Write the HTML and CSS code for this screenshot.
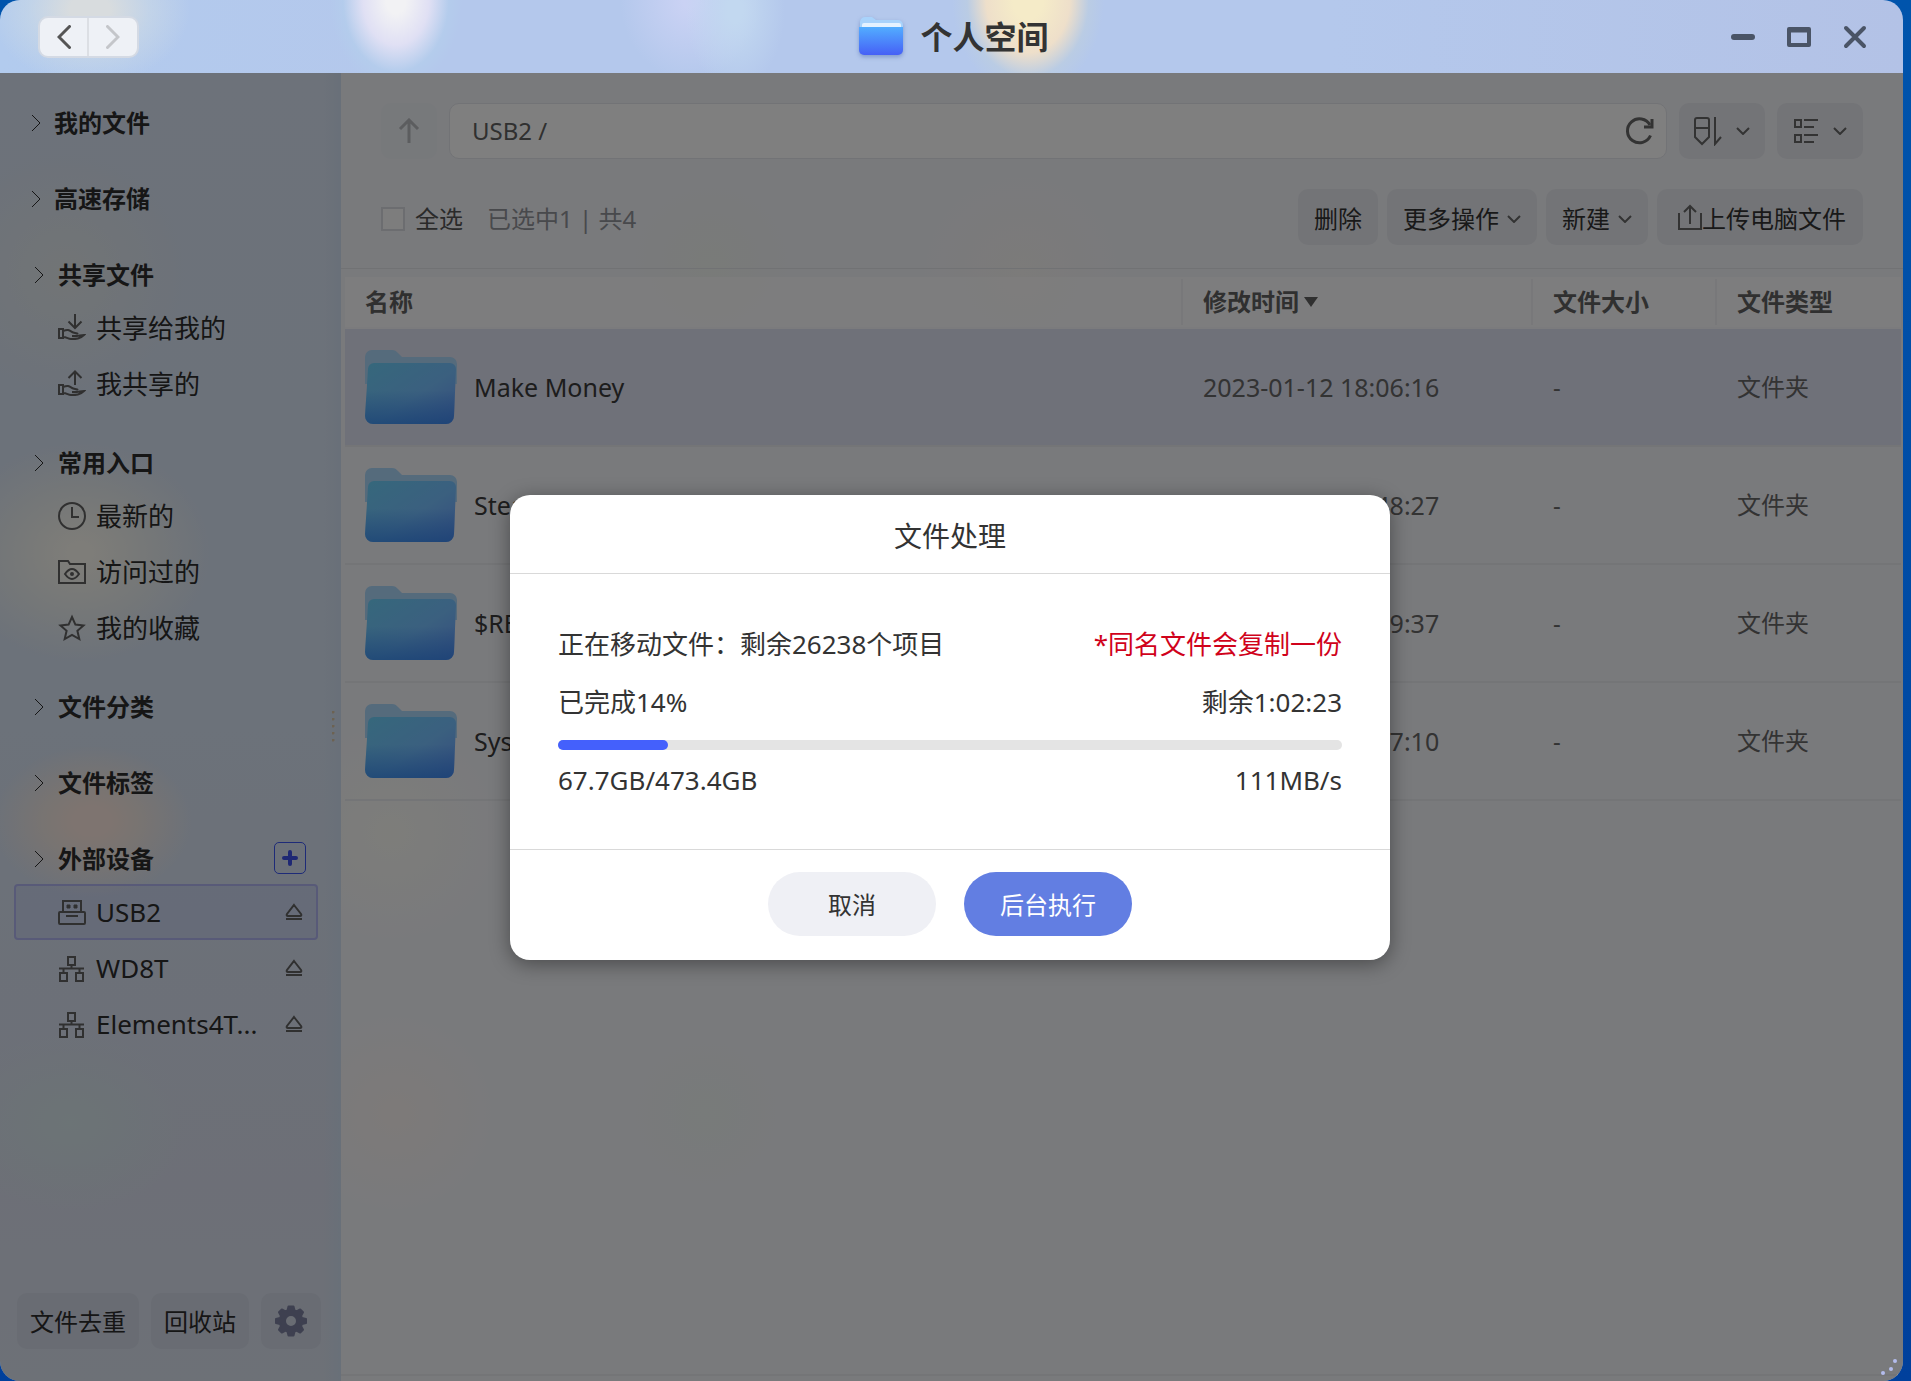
FILE: index.html
```html
<!DOCTYPE html>
<html lang="zh-CN">
<head>
<meta charset="utf-8">
<meta name="viewport" content="width=device-width, initial-scale=1">
<title>个人空间</title>
<link rel="stylesheet" href="styles.css">
</head>
<body>
<svg class="defs" width="0" height="0" aria-hidden="true">
  <defs>
    <linearGradient id="folder-front" x1="0" y1="0" x2="1" y2="1">
      <stop offset="0" stop-color="#6cd0f8"/>
      <stop offset="0.55" stop-color="#76c0ff"/>
      <stop offset="1" stop-color="#6898fc"/>
    </linearGradient>
    <linearGradient id="folder-shade" x1="0" y1="0" x2="0" y2="1">
      <stop offset="0.45" stop-color="#2a80e8" stop-opacity="0"/>
      <stop offset="1" stop-color="#2a80e8" stop-opacity="0.65"/>
    </linearGradient>
    <linearGradient id="title-folder" x1="0" y1="0" x2="0" y2="1">
      <stop offset="0" stop-color="#52adff"/>
      <stop offset="1" stop-color="#4660f6"/>
    </linearGradient>
    <symbol id="i-folder" viewBox="0 0 92 74">
      <path d="M0 7a7 7 0 0 1 7-7h20c3 0 4 1 6 3l4 4h48a7 7 0 0 1 7 7v20H0z" fill="#aad6f8"/>
      <path d="M3 19a6 6 0 0 1 6-6h76a6 6 0 0 1 6 6l-2 47a8 8 0 0 1-8 8H8a8 8 0 0 1-8-8z" fill="url(#folder-front)"/>
      <path d="M3 19a6 6 0 0 1 6-6h76a6 6 0 0 1 6 6l-2 47a8 8 0 0 1-8 8H8a8 8 0 0 1-8-8z" fill="url(#folder-shade)"/>
    </symbol>
    <symbol id="i-right" viewBox="0 0 10 18"><path d="M1 1l8 8-8 8"/></symbol>
    <symbol id="i-down" viewBox="0 0 14 8"><path d="M1 1l6 6 6-6"/></symbol>
    <symbol id="i-eject" viewBox="0 0 18 18"><path d="M9 2l7 9q1 2-1 2H3q-2 0-1-2zM1 16h16"/></symbol>
    <symbol id="i-net" viewBox="0 0 28 28"><path d="M10 3h7v8h-7zM2 19h7v8H2zM18 19h7v8h-7zM13.500 11v3.500M1 14.500h25M5.500 14.500V19M21.500 14.500V19"/></symbol>
    <symbol id="i-hand" viewBox="0 0 28 28"><path d="M1 15h4v9H1zM5 17c5-2 6-1 9 1 2 1 5 1 6 2M5 23c4 0 5 2 8 2 5 0 9 0 13-4-3 0-5 1-7 1h-5"/></symbol>
  </defs>
</svg>
<div class="window">
  <header class="titlebar">
    <div class="history">
      <button type="button" aria-label="后退"><svg width="14" height="24" viewBox="0 0 14 24"><path d="M12.500 1.500L2 12l10.500 10.500"/></svg></button>
      <button type="button" aria-label="前进" disabled><svg width="14" height="24" viewBox="0 0 14 24"><path d="M1.500 1.500L12 12 1.500 22.500"/></svg></button>
    </div>
    <div class="title">
      <svg class="title-icon" width="46" height="40" viewBox="0 0 46 40">
        <path d="M2 5a5 5 0 0 1 5-5h7l4 3h22a5 5 0 0 1 5 5v12H2z" fill="#a9d3fb"/>
        <rect x="4" y="6" width="39" height="8" rx="2" fill="#e4f2ff"/>
        <path d="M1 10h44v23a5 5 0 0 1-5 5H6a5 5 0 0 1-5-5z" fill="url(#title-folder)"/>
      </svg>
      <h1>个人空间</h1>
    </div>
    <div class="controls">
      <button type="button" aria-label="最小化"><svg width="24" height="24" viewBox="0 0 24 24"><path d="M3 12h18" stroke-width="6"/></svg></button>
      <button type="button" aria-label="最大化"><svg width="24" height="24" viewBox="0 0 24 24"><path d="M2 4h20v16H2zM2 5.500h20" stroke-width="4"/></svg></button>
      <button type="button" aria-label="关闭"><svg width="24" height="24" viewBox="0 0 24 24"><path d="M3 3l18 18M21 3L3 21" stroke-width="4"/></svg></button>
    </div>
  </header>

  <div class="body">
    <aside class="sidebar">
      <nav class="nav">
        <section>
          <h2 class="flush"><svg width="10" height="18"><use href="#i-right"/></svg>我的文件</h2>
        </section>
        <section>
          <h2 class="flush"><svg width="10" height="18"><use href="#i-right"/></svg>高速存储</h2>
        </section>
        <section>
          <h2><svg width="10" height="18"><use href="#i-right"/></svg>共享文件</h2>
          <ul>
            <li><a href="#"><svg width="28" height="28" viewBox="0 0 28 28"><use href="#i-hand"/><path d="M17 0v13M10.500 7.500l6.500 6.500 6.500-6.500"/></svg>共享给我的</a></li>
            <li><a href="#"><svg width="28" height="28" viewBox="0 0 28 28"><use href="#i-hand"/><path d="M17 15V2M10.500 8L17 1.500 23.500 8"/></svg>我共享的</a></li>
          </ul>
        </section>
        <section>
          <h2><svg width="10" height="18"><use href="#i-right"/></svg>常用入口</h2>
          <ul>
            <li><a href="#"><svg width="28" height="28" viewBox="0 0 28 28"><circle cx="14" cy="14" r="13"/><path d="M14 5v10h7"/></svg>最新的</a></li>
            <li><a href="#"><svg width="28" height="28" viewBox="0 0 28 28"><path d="M1 3h9l2 3h15v19H1z"/><path d="M7 16q7-10 14 0-7 10-14 0z"/><circle class="solid" cx="14" cy="16" r="1"/></svg>访问过的</a></li>
            <li><a href="#"><svg width="28" height="28" viewBox="0 0 28 28"><path d="M14 3l3.400 7.600 8.100.8-6.100 5.400 1.900 8.200L14 20.800 6.700 25l1.900-8.200-6.100-5.400 8.100-.8z"/></svg>我的收藏</a></li>
          </ul>
        </section>
        <section>
          <h2><svg width="10" height="18"><use href="#i-right"/></svg>文件分类</h2>
        </section>
        <section>
          <h2><svg width="10" height="18"><use href="#i-right"/></svg>文件标签</h2>
        </section>
        <section>
          <h2><svg width="10" height="18"><use href="#i-right"/></svg>外部设备
            <button class="add" type="button" aria-label="添加设备"><svg width="18" height="18" viewBox="0 0 18 18"><path d="M9 3v12M3 9h12"/></svg></button></h2>
          <ul>
            <li class="current"><a href="#"><svg width="28" height="28" viewBox="0 0 28 28"><path d="M5 14V3h18v11"/><rect x="1" y="14" width="26" height="12" rx="1"/><path d="M8 18h12"/><path class="solid" d="M9 7h3v3H9zM16 7h3v3h-3z" stroke-width="1"/></svg>USB2</a><button type="button" aria-label="弹出 USB2"><svg width="18" height="18"><use href="#i-eject"/></svg></button></li>
            <li><a href="#"><svg width="28" height="28"><use href="#i-net"/></svg>WD8T</a><button type="button" aria-label="弹出 WD8T"><svg width="18" height="18"><use href="#i-eject"/></svg></button></li>
            <li><a href="#"><svg width="28" height="28"><use href="#i-net"/></svg>Elements4T...</a><button type="button" aria-label="弹出 Elements4T"><svg width="18" height="18"><use href="#i-eject"/></svg></button></li>
          </ul>
        </section>
      </nav>
      <div class="sidebar-foot">
        <button type="button" class="wide">文件去重</button>
        <button type="button" class="medium">回收站</button>
        <button type="button" class="small" aria-label="设置">
          <svg width="32" height="32" viewBox="0 0 32 32"><path class="gear" fill-rule="evenodd" d="M13.500 1.500h5l1 4 2 1 3.700-2 2.800 2.800-2 3.700 1 2 4 1v4l-4 1-1 2 2 3.700-2.800 2.800-3.700-2-2 1-1 4h-5l-1-4-2-1-3.700 2L4 24.700 6 21l-1-2-4-1v-4l4-1 1-2-2-3.700 2.800-2.800 3.700 2 2-1zM16 10a6 6 0 1 0 0 12 6 6 0 0 0 0-12z"/></svg>
        </button>
      </div>
      <span class="grip"></span>
    </aside>

    <main class="main">
      <div class="toolbar">
        <button type="button" class="up" aria-label="上一级"><svg width="22" height="26" viewBox="0 0 22 26"><path d="M11 25V2M2 11l9-9 9 9"/></svg></button>
        <div class="address">
          <input type="text" value="USB2 /" aria-label="路径">
          <button type="button" aria-label="刷新"><svg width="30" height="30" viewBox="0 0 30 30"><path d="M25.500 19.500A12 12 0 1 1 25 9"/><path d="M27 3v8h-8"/></svg></button>
        </div>
        <button type="button" class="tool" aria-label="排序">
          <svg width="28" height="30" viewBox="0 0 28 30"><path d="M1 4q0-2 2-2h10q2 0 2 2v17l-7 7-7-7zM1 12h14M21 1v27l6-7"/></svg>
          <svg width="14" height="8"><use href="#i-down"/></svg>
        </button>
        <button type="button" class="tool" aria-label="视图">
          <svg width="26" height="26" viewBox="0 0 26 26"><path d="M2 2h6v7H2zM2 17h6v7H2zM11 2h14M11 9h10M11 17h14M11 24h10"/></svg>
          <svg width="14" height="8"><use href="#i-down"/></svg>
        </button>
      </div>
      <div class="actions">
        <label><input type="checkbox">全选</label>
        <span class="count">已选中1 | 共4</span>
        <button type="button">删除</button>
        <button type="button">更多操作<svg width="14" height="8"><use href="#i-down"/></svg></button>
        <button type="button">新建<svg width="14" height="8"><use href="#i-down"/></svg></button>
        <button type="button" class="upload"><svg width="24" height="30" viewBox="0 0 24 30"><path d="M1 9v16h22V9M12 20V2M6 8l6-6 6 6"/></svg>上传电脑文件</button>
      </div>
      <div class="list">
        <table>
          <colgroup><col><col class="c-date"><col class="c-size"><col class="c-type"></colgroup>
          <thead>
            <tr>
              <th scope="col"><span>名称</span></th>
              <th scope="col"><span>修改时间<svg width="14" height="10" viewBox="0 0 14 10"><path d="M0 0h14L7 10z"/></svg></span></th>
              <th scope="col"><span>文件大小</span></th>
              <th scope="col"><span>文件类型</span></th>
            </tr>
          </thead>
          <tbody>
            <tr class="selected"><td><div class="name"><svg width="92" height="74"><use href="#i-folder"/></svg>Make Money</div></td><td class="date">2023-01-12 18:06:16</td><td>-</td><td>文件夹</td></tr>
            <tr><td><div class="name"><svg width="92" height="74"><use href="#i-folder"/></svg>Steam</div></td><td class="date">2023-01-12 17:48:27</td><td>-</td><td>文件夹</td></tr>
            <tr><td><div class="name"><svg width="92" height="74"><use href="#i-folder"/></svg>$RECYCLE.BIN</div></td><td class="date">2023-01-12 17:39:37</td><td>-</td><td>文件夹</td></tr>
            <tr><td><div class="name"><svg width="92" height="74"><use href="#i-folder"/></svg>System</div></td><td class="date">2023-01-12 17:37:10</td><td>-</td><td>文件夹</td></tr>
          </tbody>
        </table>
      </div>
      <div class="status"></div>
    </main>

    <div class="overlay">
      <section class="dialog" role="dialog" aria-modal="true" aria-labelledby="dialog-title">
        <h2 id="dialog-title">文件处理</h2>
        <div class="dialog-body">
          <p class="first"><span>正在移动文件：剩余26238个项目</span><span class="warn">*同名文件会复制一份</span></p>
          <p><span>已完成14%</span><span>剩余1:02:23</span></p>
          <div class="bar" role="progressbar" aria-valuenow="14" aria-valuemin="0" aria-valuemax="100" aria-label="进度"><div class="fill" style="width:14%"></div></div>
          <p><span>67.7GB/473.4GB</span><span>111MB/s</span></p>
        </div>
        <footer>
          <button type="button">取消</button>
          <button type="button" class="primary">后台执行</button>
        </footer>
      </section>
    </div>
    <svg class="resize" width="16" height="16" viewBox="0 0 16 16" aria-hidden="true"><circle cx="2" cy="14" r="2"/><circle cx="10" cy="10" r="2"/><circle cx="14" cy="2" r="2"/></svg>
  </div>
</div>
</body>
</html>
```

FILE: styles.css
```css
* { box-sizing: border-box; }

body {
  margin: 0;
  background: linear-gradient(#0054ac, #00409c);
  color: #333;
  font: 24px/32px "Noto Sans", "Noto Sans CJK SC", sans-serif;
}

h1, h2, p, ul { margin: 0; padding: 0; }
ul { list-style: none; }
a { color: inherit; text-decoration: none; }

button {
  display: flex;
  align-items: center;
  justify-content: center;
  margin: 0;
  padding: 0;
  border: 0;
  background: none;
  color: inherit;
  font: inherit;
}

svg { flex: none; fill: none; stroke: currentColor; stroke-width: 2; }
.defs { position: absolute; }

.window {
  display: flex;
  flex-direction: column;
  min-height: 100vh;
  margin-right: 8px;
  border-radius: 20px;
  overflow: hidden;
}

/* Title bar */
.titlebar {
  display: grid;
  grid-template-columns: 1fr auto 1fr;
  align-items: center;
  height: 73px;
  padding: 0 36px 0 38px;
  background:
    radial-gradient(ellipse 100px 75px at 90px 10px, #d8dcde 20%, #d0dce480 60%, #b4d0ec00),
    radial-gradient(ellipse 66px 90px at 396px 0, #f2f2f4 15%, #e0e0f4 50%, #b4d0ec80 80%, #b4d0ec00),
    radial-gradient(ellipse 50px 80px at 735px 10px, #c2d8f0 15%, #b4d2ea00),
    radial-gradient(ellipse 70px 80px at 690px 0, #cad2f4 10%, #b8d0ec00),
    radial-gradient(ellipse 76px 96px at 1028px 0, #f5ebc8 20%, #eedfca 55%, #c0d0dc80 80%, #b4d0ec00),
    linear-gradient(90deg, #b2cbee, #b4c8ec 20% 70%, #b3c2e6);
}

.history {
  display: flex;
  justify-self: start;
  border: 2px solid #d4dae4;
  border-radius: 10px;
  background: #eef1f6;
}
.history button { width: 47px; height: 38px; color: #555; }
.history button + button { width: 50px; border-left: 2px solid #dcdfe4; color: #c4c6ca; }
.history svg { stroke-width: 3; stroke-linecap: round; }

.title { display: flex; align-items: center; gap: 16px; padding-left: 2px; }
.title svg { stroke: none; filter: drop-shadow(0 2px 2px #4a6ab080); }
.title h1 { font-size: 32px; line-height: 40px; }

.controls { display: flex; justify-self: end; gap: 32px; color: #4a5466; }
.controls svg { stroke-linecap: round; stroke-linejoin: round; }

/* Body */
.body { position: relative; display: flex; flex: 1; }

.sidebar {
  position: relative;
  display: flex;
  flex-direction: column;
  justify-content: space-between;
  width: 341px;
  padding: 25px 23px 32px 14px;
  background:
    radial-gradient(circle 120px at 65px 200px, #e4eaec, #dae4f200),
    radial-gradient(ellipse 130px 110px at 80px 480px, #fcfaf2 10%, #ecf0f0 50%, #dae4f200),
    radial-gradient(ellipse 100px 76px at 92px 748px, #fce8e0 20%, #f0e8e4 50%, #dae4f200),
    radial-gradient(ellipse 120px 90px at 70px 1050px, #d8e8ec, #dae0f000),
    linear-gradient(90deg, #d2e0f200 95%, #d2e0f2),
    linear-gradient(#dae4f4, #d8e4f4 50%, #dadfee 85%, #dae2ee);
  color: #2c2c2c;
}

.nav { display: flex; flex-direction: column; gap: 26px; }

.nav h2 {
  display: flex;
  align-items: center;
  gap: 14px;
  height: 50px;
  padding: 0 12px 0 20px;
  font-size: 24px;
  line-height: 32px;
}
.nav h2.flush { padding-left: 17px; gap: 13px; }
.nav h2 > svg { stroke-width: 1; }

.add {
  width: 32px;
  height: 32px;
  margin: 0 0 3px auto;
  border: 1px solid #3c56f0;
  border-radius: 5px;
  color: #3c50e8;
}
.add svg { stroke-width: 4; stroke-linecap: round; }

.nav li {
  display: flex;
  align-items: center;
  justify-content: space-between;
  height: 56px;
  padding: 0 13px 0 42px;
  border: 2px solid transparent;
  border-radius: 4px;
}
.nav li.current { border-color: #b0b4f0; background: #7888f01f; }
.nav a { display: flex; align-items: center; gap: 10px; font-size: 26px; }
.nav li svg { color: #606060; }
.nav svg .solid { fill: currentColor; }

.sidebar-foot { display: flex; gap: 12px; padding-left: 3px; }
.sidebar-foot button {
  flex: none;
  height: 56px;
  padding-top: 2px;
  border-radius: 10px;
  background: #d2d8e6;
}
.sidebar-foot .wide { width: 122px; }
.sidebar-foot .medium { width: 98px; }
.sidebar-foot .small { width: 60px; padding-top: 0; color: #7c80a0; }
.sidebar-foot svg { fill: currentColor; stroke-linejoin: round; }

.grip {
  position: absolute;
  right: 6px;
  top: 50%;
  width: 3px;
  height: 31px;
  margin-top: -16px;
  background: radial-gradient(circle at 1px 1px, #d8c4a4 1px, transparent 2px) 0 0 / 3px 7px;
}

.main {
  display: flex;
  flex: 1;
  flex-direction: column;
  min-width: 0;
  padding-top: 30px;
  background:
    radial-gradient(circle 110px at 50px 760px, #fbfbf5, #f3f4f900),
    radial-gradient(circle 100px at 54px 1040px, #fbf5f2, #f3f4f900),
    radial-gradient(circle 90px at 365px 1040px, #f0f6f4, #f3f4f900),
    radial-gradient(circle 100px at 680px 200px, #f8f6f4, #f3f4f900),
    radial-gradient(circle 90px at 370px 190px, #f2f6f2, #f3f4f900),
    #f3f4f9;
}

.toolbar { display: flex; gap: 12px; padding: 0 40px; }
.toolbar > * { height: 56px; border-radius: 10px; }
.up { width: 56px; background: #eef2f6; color: #b8babe; }
.up svg { stroke-width: 3; }

.address {
  display: flex;
  flex: 1;
  align-items: center;
  padding: 0 11px 0 22px;
  border: 1px solid #e4e6ec;
  background: #fff;
}
.address input {
  flex: 1;
  min-width: 0;
  padding: 0;
  border: 0;
  outline: 0;
  background: none;
  color: #606060;
  font: inherit;
}
.address svg { stroke-width: 3; color: #666; }

.tool { width: 86px; gap: 14px; background: #e6e8ee; color: #666; }

.actions {
  display: flex;
  align-items: center;
  gap: 9px;
  padding: 30px 40px 23px;
  border-bottom: 1px solid #e2e4e8;
}
.actions label { display: flex; align-items: center; gap: 10px; padding-top: 4px; color: #555; }
.actions input {
  appearance: none;
  width: 24px;
  height: 24px;
  margin: 0;
  border: 2px solid #d8dae0;
  background: #fbfbfb;
}
.count { margin: 0 auto 0 15px; padding-top: 4px; color: #909298; }
.actions button {
  gap: 8px;
  height: 56px;
  padding: 3px 16px 0;
  border-radius: 10px;
  background: #e6e9ee;
}
.actions button svg { color: #666; }
.actions .upload { gap: 0; padding: 3px 17px 0 21px; }

/* File list */
.list { flex: 1; padding: 8px 2px 0 4px; }
.status { height: 7px; border-top: 2px solid #e8eaee; }

table { width: 100%; table-layout: fixed; border-collapse: collapse; }
.c-date { width: 350px; }
.c-size { width: 184px; }
.c-type { width: 186px; }

th {
  height: 51px;
  padding: 0;
  border-bottom: 2px solid #f6f6fa;
  background: #fdfdfdcc;
  color: #606060;
  text-align: left;
}
th span {
  display: flex;
  align-items: center;
  gap: 5px;
  height: 46px;
  padding-left: 20px;
  border-left: 2px solid #f0f1f4;
}
th:first-child span { padding-left: 18px; border-color: transparent; }
th svg { fill: currentColor; stroke: none; }

td { height: 118px; padding: 0 0 0 22px; border-bottom: 2px solid #e8eaee; color: #666; }
td:first-child { padding-left: 20px; }
.selected td { background: #dfe2f2; }
.name { display: flex; align-items: center; gap: 17px; color: #3a3a3a; }
.name, .date { font-size: 25px; }
.name svg { stroke: none; }

/* Progress dialog */
.overlay {
  position: absolute;
  inset: 0;
  display: flex;
  align-items: center;
  justify-content: center;
  padding-right: 3px;
  background: #00000080;
}

.dialog {
  width: 880px;
  border-radius: 20px;
  background: #fff;
  box-shadow: 0 4px 20px #00000066;
}
.dialog h2 {
  padding: 24px 0 19px;
  border-bottom: 1px solid #d9d9d9;
  font-size: 28px;
  font-weight: 400;
  line-height: 35px;
  text-align: center;
}
.dialog-body { padding: 40px 48px 51px; font-size: 26px; line-height: 36px; }
.dialog p { display: flex; justify-content: space-between; }
.dialog .first { margin: 12px 0 22px; }
.warn { color: #d0021b; }

.bar { height: 10px; margin: 20px 0 12px; border-radius: 5px; background: #e4e4e4; }
.fill { height: 100%; border-radius: 5px; background: #4460fc; }

.dialog footer {
  display: flex;
  justify-content: center;
  gap: 28px;
  padding: 22px 0 24px;
  border-top: 1px solid #d9d9d9;
}
.dialog footer button {
  width: 168px;
  height: 64px;
  padding-top: 2px;
  border-radius: 32px;
  background: #eff0f5;
}
.dialog footer .primary { background: #627ee2; color: #fff; }

.resize { position: absolute; right: 6px; bottom: 6px; fill: #b4bcec; stroke: none; }
```
